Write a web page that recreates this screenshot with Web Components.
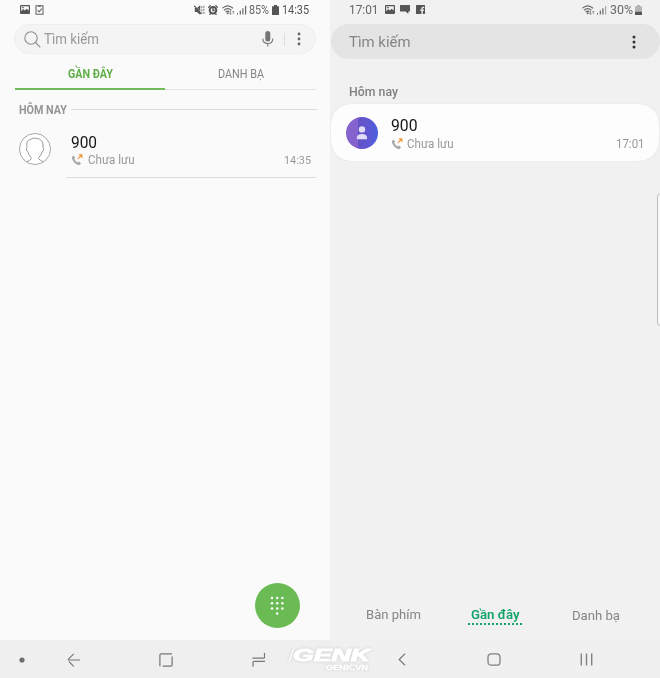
<!DOCTYPE html>
<html lang="vi">
<head>
<meta charset="utf-8">
<title>Danh bạ</title>
<style>
html,body{margin:0;height:100%;overflow:hidden}
body{font-family:Roboto,"Liberation Sans",sans-serif;background:#f1f1f1}
</style>
</head>
<body>
<phone-pair></phone-pair>
<script>
const define = (name, html, setup) => {
  const tpl = document.createElement('template');
  tpl.innerHTML = html;
  customElements.define(name, class extends HTMLElement {
    connectedCallback() {
      if (this.shadowRoot) return;
      this.attachShadow({mode: 'open'}).append(tpl.content.cloneNode(true));
      if (setup) setup(this, this.shadowRoot);
    }
  });
};

/* Label whose glyphs are condensed or expanded to a given advance width. */
define('ui-label', `<style>
:host{display:block;white-space:nowrap;flex:none}
span{display:inline-block;transform-origin:0 50%}
</style><span><slot></slot></span>`, (el, root) => {
  const size = +el.getAttribute('size'), w = +el.getAttribute('w');
  el.style.fontSize = size + 'px';
  el.style.lineHeight = Math.round(size * 1.25) + 'px';
  el.style.fontWeight = el.getAttribute('weight') || 400;
  el.style.color = el.getAttribute('color');
  const span = root.querySelector('span');
  const natural = span.getBoundingClientRect().width;
  el.style.width = w + 'px';
  if (natural) span.style.transform = `scaleX(${w / natural})`;
});

const icons = {
  picture: [10, 9, `<path fill="#555" fill-rule="evenodd" d="M1 0h8a1 1 0 0 1 1 1v7a1 1 0 0 1-1 1H1a1 1 0 0 1-1-1V1a1 1 0 0 1 1-1ZM1.2 1.2v5L3.3 4l1.6 1.5L6.6 3.8l2.2 1.8V1.2Z"/><circle cx="3" cy="2.6" r=".8" fill="#555"/>`],
  clip: [9, 10, `<path fill="none" stroke="#666" stroke-width="1.1" d="M1 .8h7v8.4H1zM2.7 5.2l1.5 1.6 2.6-3.3"/><path fill="#666" d="M3 .5h3v1.3H3z"/>`],
  mute: [11, 10, `<path fill="#555" d="M.8 3h2l3.4-2.8v9.6L2.8 7h-2z"/><path stroke="#fafafa" stroke-width=".5" d="M1.4.5l5.6 6.6"/><path stroke="#555" stroke-width="1.2" fill="none" d="M.3.8l7 8"/><path stroke="#666" stroke-width="1" fill="none" d="M7.8 1.2v2M7.8 4.4v1.8M7.8 7.4v1.6M9.9 .8v1.8M9.9 3.8v1.8M9.9 6.8v1.8"/>`],
  alarm: [10, 10, `<circle cx="5" cy="5.3" r="3.3" fill="none" stroke="#555" stroke-width="2"/><path d="M.3 2.7 2.6.4M9.7 2.7 7.4.4M1.5 9.8l1.3-1.4M8.5 9.8 7.2 8.4M5 3v2.5h1.8" stroke="#555" stroke-width="1.3" fill="none"/>`],
  wifi: [13, 10, `<g fill="none" stroke="#666" stroke-width="1.15"><path d="M.5 3.2Q5.5-1.5 11 3.2M2 5.2Q5.7 2 9.4 5.2M3.7 7Q5.8 5.3 7.5 7"/></g><circle cx="5.7" cy="8.2" r="1" fill="#666"/><path d="M8.5 5.8v3.5M7.5 8.2l1 1.2 1-1.2M11.3 9V6M10.4 7l.9-1 .9 1" stroke="#777" stroke-width=".7" fill="none"/>`],
  signal: [10, 10, `<path fill="#666" d="M0 8h1v1.5H0zM2.7 5.5h1.2v4H2.7zM5.3 3.3h1.2v6.2H5.3z"/><path fill="#aaa" d="M8 1h1.2v8.5H8z"/>`],
  signal4: [10, 10, `<path fill="#666" d="M0 8h1v1.5H0zM2.7 5.5h1.2v4H2.7zM5.3 3.3h1.2v6.2H5.3zM8 .8h1.2v8.7H8z"/>`],
  battery: [7, 10, `<path fill="#555" d="M2 0h3v1.2h1.5q.5 0 .5.5V9.5q0 .5-.5.5H.5Q0 10 0 9.5V1.7q0-.5.5-.5H2z"/>`],
  battery30: [7, 10, `<path fill="#b5b5b5" d="M2 0h3v1.2h1.5q.5 0 .5.5V7H0V1.7q0-.5.5-.5H2z"/><path fill="#555" d="M0 6.8h7v2.7q0 .5-.5.5H.5Q0 10 0 9.5z"/>`],
  chat: [10, 9, `<path fill="#555" d="M.6 0h8.8q.6 0 .6.6v5.3q0 .6-.6.6H8.3V9L5.6 6.5h-5Q0 6.5 0 5.9V.6Q0 0 .6 0z"/>`],
  face: [9, 9, `<path fill="#555" fill-rule="evenodd" d="M.5 0h8q.5 0 .5.5v8q0 .5-.5.5H6.8V5.7h1.1l.2-1.3H6.8V3.5q0-.6.6-.6h.8V1.7H7Q5.4 1.7 5.4 3.3v1.1H4.2v1.3h1.2V9H.5Q0 9 0 8.5v-8Q0 0 .5 0z"/>`],
  search: [17, 17, `<g fill="none" stroke="#8d8d8d" stroke-width="1.1"><circle cx="7" cy="7" r="6.2"/><path d="M11.5 11.5 16.3 16.3"/></g>`],
  mic: [12, 16, `<rect x="3.3" y="0" width="5" height="10.5" rx="2.5" fill="#757575"/><path d="M.8 7.5q0 5 5 5t5-5M5.8 12.5v3" fill="none" stroke="#757575" stroke-width="1.1"/>`],
  more: [4, 14, `<g fill="#666"><circle cx="2" cy="2" r="1.4"/><circle cx="2" cy="7" r="1.4"/><circle cx="2" cy="12" r="1.4"/></g>`],
  moreDark: [4, 14, `<g fill="#333"><circle cx="2" cy="2" r="1.5"/><circle cx="2" cy="7" r="1.5"/><circle cx="2" cy="12" r="1.5"/></g>`],
  head: [32, 32, `<circle cx="16" cy="16" r="15.5" fill="#fff" stroke="#a8a8a8" stroke-width="1"/><path d="M7.8 28.8Q11 27.5 12.4 25.5Q12.4 24.6 10.6 22.8Q9.4 21.5 9 18.9Q7.3 18.2 7.4 15.7Q7.4 15 8 14.6Q6.6 7.1 11.7 6.4Q14 4.3 17.5 5.4Q24.8 6 24 14.6Q24.9 15 24.6 16.9Q24.3 18.5 23.1 18.9Q22.5 22 20 24.2Q19 25 19.6 25.7Q21 27.5 24.4 28.8" fill="none" stroke="#999" stroke-width="1"/>`],
  call: [12, 12, `<path d="M1 2.8 2.5 1.7l1.7 2.1L3.3 5Q4.4 7.4 6.7 8.4L8 7.5l2 1.7-1.1 1.6Q6.8 11.8 3.7 8.9.6 5.6 1 2.8z" fill="#a7a7a7"/><path d="M6.8 4.9 10.3 1.4M7.8.9h3v3" fill="none" stroke="#f0973a" stroke-width="1.2"/>`],
  person: [32, 32, `<defs><linearGradient id="g"><stop offset="0" stop-color="#8364cc"/><stop offset=".37" stop-color="#8662cf"/><stop offset=".38" stop-color="#6552c7"/><stop offset=".7" stop-color="#5f57d2"/><stop offset="1" stop-color="#4960e0"/></linearGradient></defs><circle cx="16" cy="16" r="16" fill="url(#g)"/><circle cx="16" cy="12.4" r="3.2" fill="#e1dcf7"/><path fill="#e1dcf7" d="M10.9 22.2v-1.4q0-3.8 5.1-3.8t5.1 3.8v1.4z"/>`],
  keypad: [14, 20, `<g fill="#fff"><circle cx="2" cy="2" r="1.25"/><circle cx="7.2" cy="2" r="1.25"/><circle cx="12.4" cy="2" r="1.25"/><circle cx="2" cy="7.2" r="1.25"/><circle cx="7.2" cy="7.2" r="1.25"/><circle cx="12.4" cy="7.2" r="1.25"/><circle cx="2" cy="12.4" r="1.25"/><circle cx="7.2" cy="12.4" r="1.25"/><circle cx="12.4" cy="12.4" r="1.25"/><circle cx="7.2" cy="17.4" r="1.25"/></g>`],
  dot: [6, 6, `<circle cx="3" cy="3" r="2.6" fill="#6e6e6e"/>`],
  arrow: [14, 14, `<path d="M13 7H1M6.7.8.9 6.6M2 8.5l4.7 4.8" fill="none" stroke="#777" stroke-width="1.1"/>`],
  square: [14, 14, `<path d="M.9 13.2V2q0-1.2 1.2-1.2H13M13.1 3.6V12q0 1.2-1.2 1.2H3.6" fill="none" stroke="#777" stroke-width="1.2"/>`],
  recent: [14, 14, `<path d="M.3 5.2H11.5Q12.5 5.2 12.5 4.2V0M13 8.4H2Q1 8.4 1 9.4V13.7" fill="none" stroke="#777" stroke-width="1.2"/>`],
  back: [8, 13, `<path d="M7 .8 1.2 6.5 7 12.2" fill="none" stroke="#808080" stroke-width="1.3"/>`],
  home: [14, 13, `<rect x="1" y=".8" width="12" height="11.4" rx="3.3" fill="none" stroke="#808080" stroke-width="1.3"/>`],
  bars: [13, 13, `<path d="M1.3.5v12M6.5.5v12M11.7.5v12" stroke="#808080" stroke-width="1.4"/>`]
};
define('ui-icon', `<style>:host{display:block;flex:none}svg{display:block}</style><div></div>`, (el, root) => {
  const [w, h, body] = icons[el.getAttribute('name')];
  root.querySelector('div').innerHTML = `<svg width="${w}" height="${h}" viewBox="0 0 ${w} ${h}">${body}</svg>`;
});

define('status-bar', `<style>
:host{display:flex;height:20px;align-items:center;justify-content:space-between;box-sizing:border-box}
div{display:flex;align-items:center}
</style><div><slot name="left"></slot></div><div><slot></slot></div>`);

define('search-bar', `<style>
:host{display:flex;align-items:center;box-sizing:border-box}
</style><slot></slot>`);

define('call-row', `<style>
:host{display:flex;box-sizing:border-box}
.body{flex:1}
.sub{display:flex;align-items:center}
ui-icon{margin:0 0 2px 1px}
.time{margin-left:auto}
</style><slot name="avatar"></slot>
<div class="body"><slot></slot><div class="sub"><ui-icon name="call"></ui-icon><slot name="note"></slot><div class="time"><slot name="time"></slot></div></div></div>`);

define('site-mark', `<style>
:host{display:block}
svg{display:block;overflow:visible}
text{font-family:"Liberation Sans",sans-serif;font-weight:700;font-style:italic;fill:#fff}
.glow{filter:drop-shadow(0 0 1.5px #ccc)}
</style><svg width="88" height="28" viewBox="0 0 88 28"><g class="glow">
<path d="M6.5 4 2 17" stroke="#fff" stroke-width="1.2"/>
<text x="6" y="15.5" font-size="16" textLength="77" lengthAdjust="spacingAndGlyphs" stroke="#fff" stroke-width="1">GENK</text>
<text x="39" y="25.3" font-size="6.5" textLength="42" lengthAdjust="spacingAndGlyphs" stroke="#fff" stroke-width=".3" style="font-style:normal">GENK.VN</text></g></svg>`);

define('classic-screen', `<style>
:host{display:flex;flex-direction:column;background:#fafafa}
status-bar{padding:0 21px 0 20px}
search-bar{height:30px;margin:4px 14px 0;padding:0 14px 0 9px;border:1px solid #eee;border-radius:15px;background:#f4f4f4}
.tabs{display:grid;grid-template-columns:150px 151px;margin:5px 14px 0 15px;height:31px}
.tab{display:flex;justify-content:center;align-items:center;border-bottom:1px solid #e3e3e3;padding-top:1px;box-sizing:border-box}
.on{border-bottom:2px solid #72bb5c;padding-top:2px}
.section{display:flex;align-items:center;height:20px;margin:10px 13px 0 19px;gap:4px}
.section i{flex:1;height:1px;background:#dcdcdc;margin-bottom:1px}
call-row{height:57px;padding:13px 19px 0 19px}
.rule{height:1px;background:#dcdcdc;margin:0 14px 0 66px}
.space{flex:1;display:flex;align-items:flex-end;justify-content:flex-end;padding:0 30.5px 12px 0}
.fab{width:45px;height:45px;border-radius:50%;background:#6bbb54;display:grid;place-items:center}
nav{height:38px;background:#efefef;display:flex;align-items:center;padding:1px 0 0 19px;box-sizing:border-box}
</style>
<status-bar><ui-icon slot="left" name="picture" style="margin-bottom:1px"></ui-icon><ui-icon slot="left" name="clip" style="margin:0 0 1px 5px"></ui-icon>
<ui-icon name="mute" style="margin-bottom:1px"></ui-icon><ui-icon name="alarm" style="margin:0 0 1px 3px"></ui-icon><ui-icon name="wifi" style="margin-left:4px"></ui-icon><ui-icon name="signal4" style="margin-left:2px"></ui-icon><ui-label size="12" w="20" color="#666" style="margin-left:2px">85%</ui-label><ui-icon name="battery" style="margin:0 0 1px 3px"></ui-icon><ui-label size="12" w="27" color="#555" style="margin-left:3px">14:35</ui-label></status-bar>
<search-bar><ui-icon name="search"></ui-icon><ui-label size="14" w="55" color="#999" style="margin-left:3px">Tìm kiếm</ui-label><ui-icon name="mic" style="margin-left:auto"></ui-icon><span style="width:1px;height:13px;background:#ddd;margin:0 12px 0 10px"></span><ui-icon name="more"></ui-icon></search-bar>
<div class="tabs"><div class="tab on"><ui-label size="12" w="45" weight="700" color="#5fae49">GẦN ĐÂY</ui-label></div><div class="tab"><ui-label size="12" w="46" color="#858585">DANH BẠ</ui-label></div></div>
<div class="section"><ui-label size="12" w="48" weight="700" color="#959595">HÔM NAY</ui-label><i></i></div>
<call-row><ui-icon slot="avatar" name="head" style="margin:0 19px 0 0"></ui-icon><ui-label size="16" w="26" color="#151515" style="margin-left:.5px">900</ui-label><ui-label slot="note" size="12" w="46.5" color="#999" style="margin-left:5px">Chưa lưu</ui-label><ui-label slot="time" size="11" w="27" color="#999">14:35</ui-label></call-row>
<div class="rule"></div>
<div class="space"><div class="fab"><ui-icon name="keypad"></ui-icon></div></div>
<nav><ui-icon name="dot"></ui-icon><ui-icon name="arrow" style="margin-left:42px"></ui-icon><ui-icon name="square" style="margin-left:78px"></ui-icon><ui-icon name="recent" style="margin-left:79px"></ui-icon></nav>`);

define('modern-screen', `<style>
:host{display:flex;flex-direction:column;background:#f1f1f1;position:relative}
status-bar{padding:0 18px 0 19px}
search-bar{height:35px;margin:4px 0 0 1px;padding:0 24px 0 18px;border-radius:17.5px;background:#e4e4e4}
.section{height:20px;display:flex;align-items:center;margin:23px 0 0 19px}
call-row{height:57px;margin:2px 1px 0;padding:12px 15px 0;border-radius:20px;background:#fdfdfd;box-shadow:0 0 1px #ccc}
.tabs{flex:1;display:flex;align-items:flex-end;padding:0 0 15px 36px}
.on{border-bottom:2px dotted #18a069;padding:0 2.5px;margin-left:47px}
nav{height:38px;background:#f0f0f0;display:flex;align-items:center;padding:1px 0 0 68px;box-sizing:border-box}
.edge{position:absolute;right:-5px;top:193px;width:6px;height:131px;border:1px solid #bdbdbd;border-radius:4px;background:#f8f8f8}
</style>
<status-bar><ui-label slot="left" size="12.5" w="29.5" color="#666">17:01</ui-label><ui-icon slot="left" name="picture" style="margin:0 0 1px 6px"></ui-icon><ui-icon slot="left" name="chat" style="margin:0 0 1px 5px"></ui-icon><ui-icon slot="left" name="face" style="margin:0 0 1px 6px"></ui-icon>
<ui-icon name="wifi" style="margin-bottom:1px"></ui-icon><ui-icon name="signal" style="margin-left:2px"></ui-icon><ui-label size="12.5" w="23" color="#666" style="margin-left:3px">30%</ui-label><ui-icon name="battery30" style="margin:0 0 1px 2px"></ui-icon></status-bar>
<search-bar><ui-label size="15" w="61.5" color="#858585" style="margin-top:2px">Tìm kiếm</ui-label><ui-icon name="moreDark" style="margin-left:auto"></ui-icon></search-bar>
<div class="section"><ui-label size="12.5" w="49" weight="500" color="#808080">Hôm nay</ui-label></div>
<call-row><ui-icon slot="avatar" name="person" style="margin:1px 12px 0 0"></ui-icon><ui-label size="16" w="26.5" color="#151515" style="margin:0 0 1px 1px">900</ui-label><ui-label slot="note" size="12" w="46.5" color="#999" style="margin-left:4px">Chưa lưu</ui-label><ui-label slot="time" size="12" w="28.5" color="#999">17:01</ui-label></call-row>
<div class="tabs"><ui-label size="13" w="55" color="#858585" style="margin-bottom:2px">Bàn phím</ui-label><div class="on"><ui-label size="13.5" w="48.5" weight="600" color="#14a368">Gần đây</ui-label></div><ui-label size="13" w="48" color="#858585" style="margin:0 0 1px 50.5px">Danh bạ</ui-label></div>
<nav><ui-icon name="back"></ui-icon><ui-icon name="home" style="margin-left:81px"></ui-icon><ui-icon name="bars" style="margin-left:79px"></ui-icon></nav>
<div class="edge"></div>`);

define('phone-pair', `<style>
:host{display:grid;grid-template-columns:330px 330px;width:660px;height:678px;position:relative;overflow:hidden}
site-mark{position:absolute;left:287px;top:645px}
</style><classic-screen></classic-screen><modern-screen></modern-screen><site-mark></site-mark>`);
</script>
</body>
</html>
